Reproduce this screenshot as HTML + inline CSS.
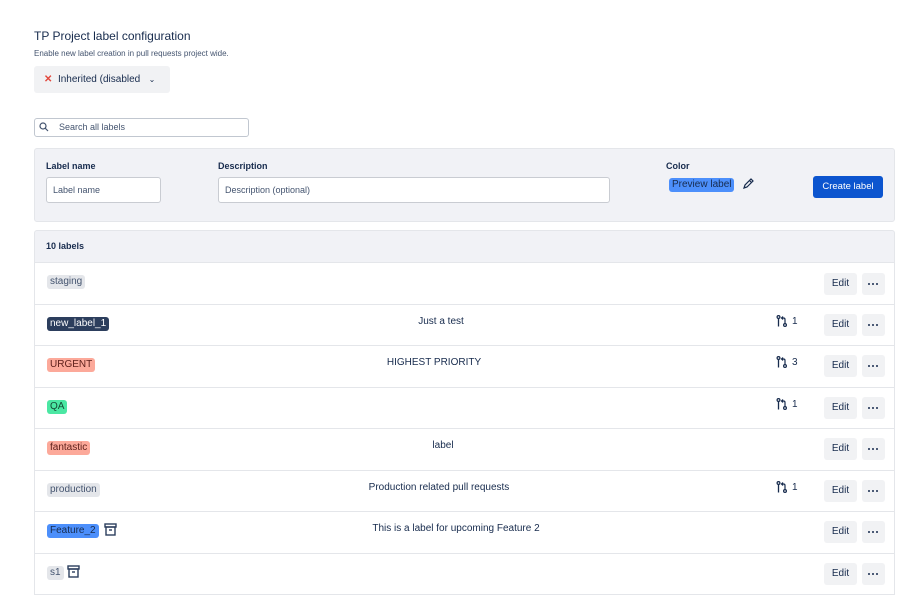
<!DOCTYPE html>
<html><head><style>
*{box-sizing:border-box;margin:0;padding:0}
body{width:920px;height:597px;overflow:hidden;background:#fff;font-family:"Liberation Sans",sans-serif;color:#172b4d;position:relative}
.a{position:absolute}
.lbl{position:absolute;font-size:10px;padding:1px 3px;border-radius:3px;line-height:12px}
.row{position:absolute;left:34px;width:861px;border-bottom:1px solid #e4e6ea;border-left:1px solid #e4e6ea;border-right:1px solid #e4e6ea}
.desc{position:absolute;font-size:10px;width:270px;text-align:center;top:12px}
.edit{position:absolute;left:789px;width:33px;height:22px;background:#f1f2f4;border-radius:3px;font-size:10px;text-align:center;line-height:22px}
.more{position:absolute;left:827px;width:23px;height:22px;background:#f1f2f4;border-radius:3px}
.more:before{content:"";position:absolute;left:6px;top:10px;width:2.4px;height:2.4px;border-radius:50%;background:#172b4d;box-shadow:4px 0 #172b4d,8px 0 #172b4d}
.pr{position:absolute;left:741px;font-size:10px;top:10px;display:flex;align-items:center;gap:4px}
</style></head><body>
<div class="a" style="left:34px;top:29px;font-size:12px;color:#172b4d">TP Project label configuration</div>
<div class="a" style="left:34px;top:49px;font-size:8px;color:#44546f">Enable new label creation in pull requests project wide.</div>
<div class="a" style="left:34px;top:66px;width:136px;height:27px;background:#f1f2f4;border-radius:3px;font-size:10px;line-height:27px;padding-left:10px"><span style="color:#e2483d;font-weight:bold">✕</span>&nbsp; Inherited (disabled &nbsp; <span style="font-size:8px">⌄</span></div>
<div class="a" style="left:34px;top:118px;width:215px;height:19px;border:1px solid #c1c7d0;border-radius:3px;font-size:9px;line-height:17px;padding-left:24px;color:#44546f">Search all labels</div>
<svg class="a" style="left:39px;top:122px" width="10" height="10"><circle cx="4" cy="4" r="3" stroke="#44546f" fill="none" stroke-width="1.2"/><path d="M6.2 6.2L9 9" stroke="#44546f" stroke-width="1.2"/></svg>
<div class="a" style="left:34px;top:148px;width:861px;height:74px;background:#f1f2f6;border:1px solid #e4e6ea;border-radius:3px"></div>
<div class="a" style="left:46px;top:161px;font-size:9px;font-weight:bold">Label name</div>
<div class="a" style="left:46px;top:177px;width:115px;height:26px;background:#fff;border:1px solid #c9ccd2;border-radius:3px;font-size:9px;line-height:24px;padding-left:6px;color:#44546f">Label name</div>
<div class="a" style="left:218px;top:161px;font-size:9px;font-weight:bold">Description</div>
<div class="a" style="left:218px;top:177px;width:392px;height:26px;background:#fff;border:1px solid #c9ccd2;border-radius:3px;font-size:9px;line-height:24px;padding-left:6px;color:#44546f">Description (optional)</div>
<div class="a" style="left:666px;top:161px;font-size:9px;font-weight:bold">Color</div>
<div class="lbl" style="left:669px;top:178px;background:#4c8ffb;color:#172b4d;font-size:10px">Preview label</div>
<svg class="a" style="left:742px;top:178px" width="12" height="12"><path d="M2 10l1-3 6-6 2 2-6 6z M7.5 2.5l2 2" stroke="#172b4d" fill="none" stroke-width="1.2"/></svg>
<div class="a" style="left:813px;top:176px;width:70px;height:22px;background:#0c55cf;border-radius:3px;color:#fff;font-size:9.5px;text-align:center;line-height:22px">Create label</div>
<div class="a" style="left:34px;top:230px;width:861px;height:33px;background:#f1f2f6;border:1px solid #e4e6ea;border-radius:3px 3px 0 0;font-size:9px;font-weight:bold;line-height:31px;padding-left:11px">10 labels</div>

<svg width="0" height="0" style="position:absolute"><defs><symbol id="pr" viewBox="0 0 12 12"><circle cx="2.5" cy="2" r="1.4" fill="none" stroke="#172b4d" stroke-width="1.2"/><path d="M2.5 3.5v8" stroke="#172b4d" stroke-width="1.3"/><circle cx="9" cy="10" r="1.4" fill="none" stroke="#172b4d" stroke-width="1.2"/><path d="M9 8.5V4.5Q9 3 7.5 3H5.5M7 1.5L5.5 3 7 4.5" fill="none" stroke="#172b4d" stroke-width="1.2"/></symbol><symbol id="ar" viewBox="0 0 13 13"><rect x="1" y="1" width="11" height="3" fill="none" stroke="#2c3e5d" stroke-width="1.4"/><rect x="2" y="4" width="9" height="8" fill="none" stroke="#2c3e5d" stroke-width="1.4"/><path d="M5 7h3" stroke="#2c3e5d" stroke-width="1.4"/></symbol></defs></svg>

<div class="row" style="top:263px;height:42px"><span class="lbl" style="left:12px;top:12px;background:#e4e6ea;color:#44546f">staging</span><div class="edit" style="top:10px">Edit</div><div class="more" style="top:10px"></div></div>
<div class="row" style="top:305px;height:41px"><span class="lbl" style="left:12px;top:12px;background:#2c3e5d;color:#fff">new_label_1</span><div class="desc" style="top:11px;left:271px">Just a test</div><div class="pr"><svg width="12" height="12"><use href="#pr"/></svg>1</div><div class="edit" style="top:9px">Edit</div><div class="more" style="top:9px"></div></div>
<div class="row" style="top:346px;height:42px"><span class="lbl" style="left:12px;top:12px;background:#fca99a;color:#5d1f1a">URGENT</span><div class="desc" style="top:11px;left:264px">HIGHEST PRIORITY</div><div class="pr"><svg width="12" height="12"><use href="#pr"/></svg>3</div><div class="edit" style="top:9px">Edit</div><div class="more" style="top:9px"></div></div>
<div class="row" style="top:388px;height:41px"><span class="lbl" style="left:12px;top:12px;background:#4be7a3;color:#164b35">QA</span><div class="pr"><svg width="12" height="12"><use href="#pr"/></svg>1</div><div class="edit" style="top:9px">Edit</div><div class="more" style="top:9px"></div></div>
<div class="row" style="top:429px;height:42px"><span class="lbl" style="left:12px;top:12px;background:#fca99a;color:#5d1f1a">fantastic</span><div class="desc" style="top:11px;left:273px">label</div><div class="edit" style="top:9px">Edit</div><div class="more" style="top:9px"></div></div>
<div class="row" style="top:471px;height:41px"><span class="lbl" style="left:12px;top:12px;background:#e4e6ea;color:#44546f">production</span><div class="desc" style="top:11px;left:269px">Production related pull requests</div><div class="pr"><svg width="12" height="12"><use href="#pr"/></svg>1</div><div class="edit" style="top:9px">Edit</div><div class="more" style="top:9px"></div></div>
<div class="row" style="top:512px;height:42px"><span class="lbl" style="left:12px;top:12px;background:#4c8ffb;color:#172b4d">Feature_2</span><svg class="a" style="left:69px;top:11px" width="13" height="13"><use href="#ar"/></svg><div class="desc" style="top:11px;left:286px">This is a label for upcoming Feature 2</div><div class="edit" style="top:9px">Edit</div><div class="more" style="top:9px"></div></div>
<div class="row" style="top:554px;height:41px"><span class="lbl" style="left:12px;top:12px;background:#e4e6ea;color:#44546f">s1</span><svg class="a" style="left:32px;top:11px" width="13" height="13"><use href="#ar"/></svg><div class="edit" style="top:9px">Edit</div><div class="more" style="top:9px"></div></div>
</body></html>
